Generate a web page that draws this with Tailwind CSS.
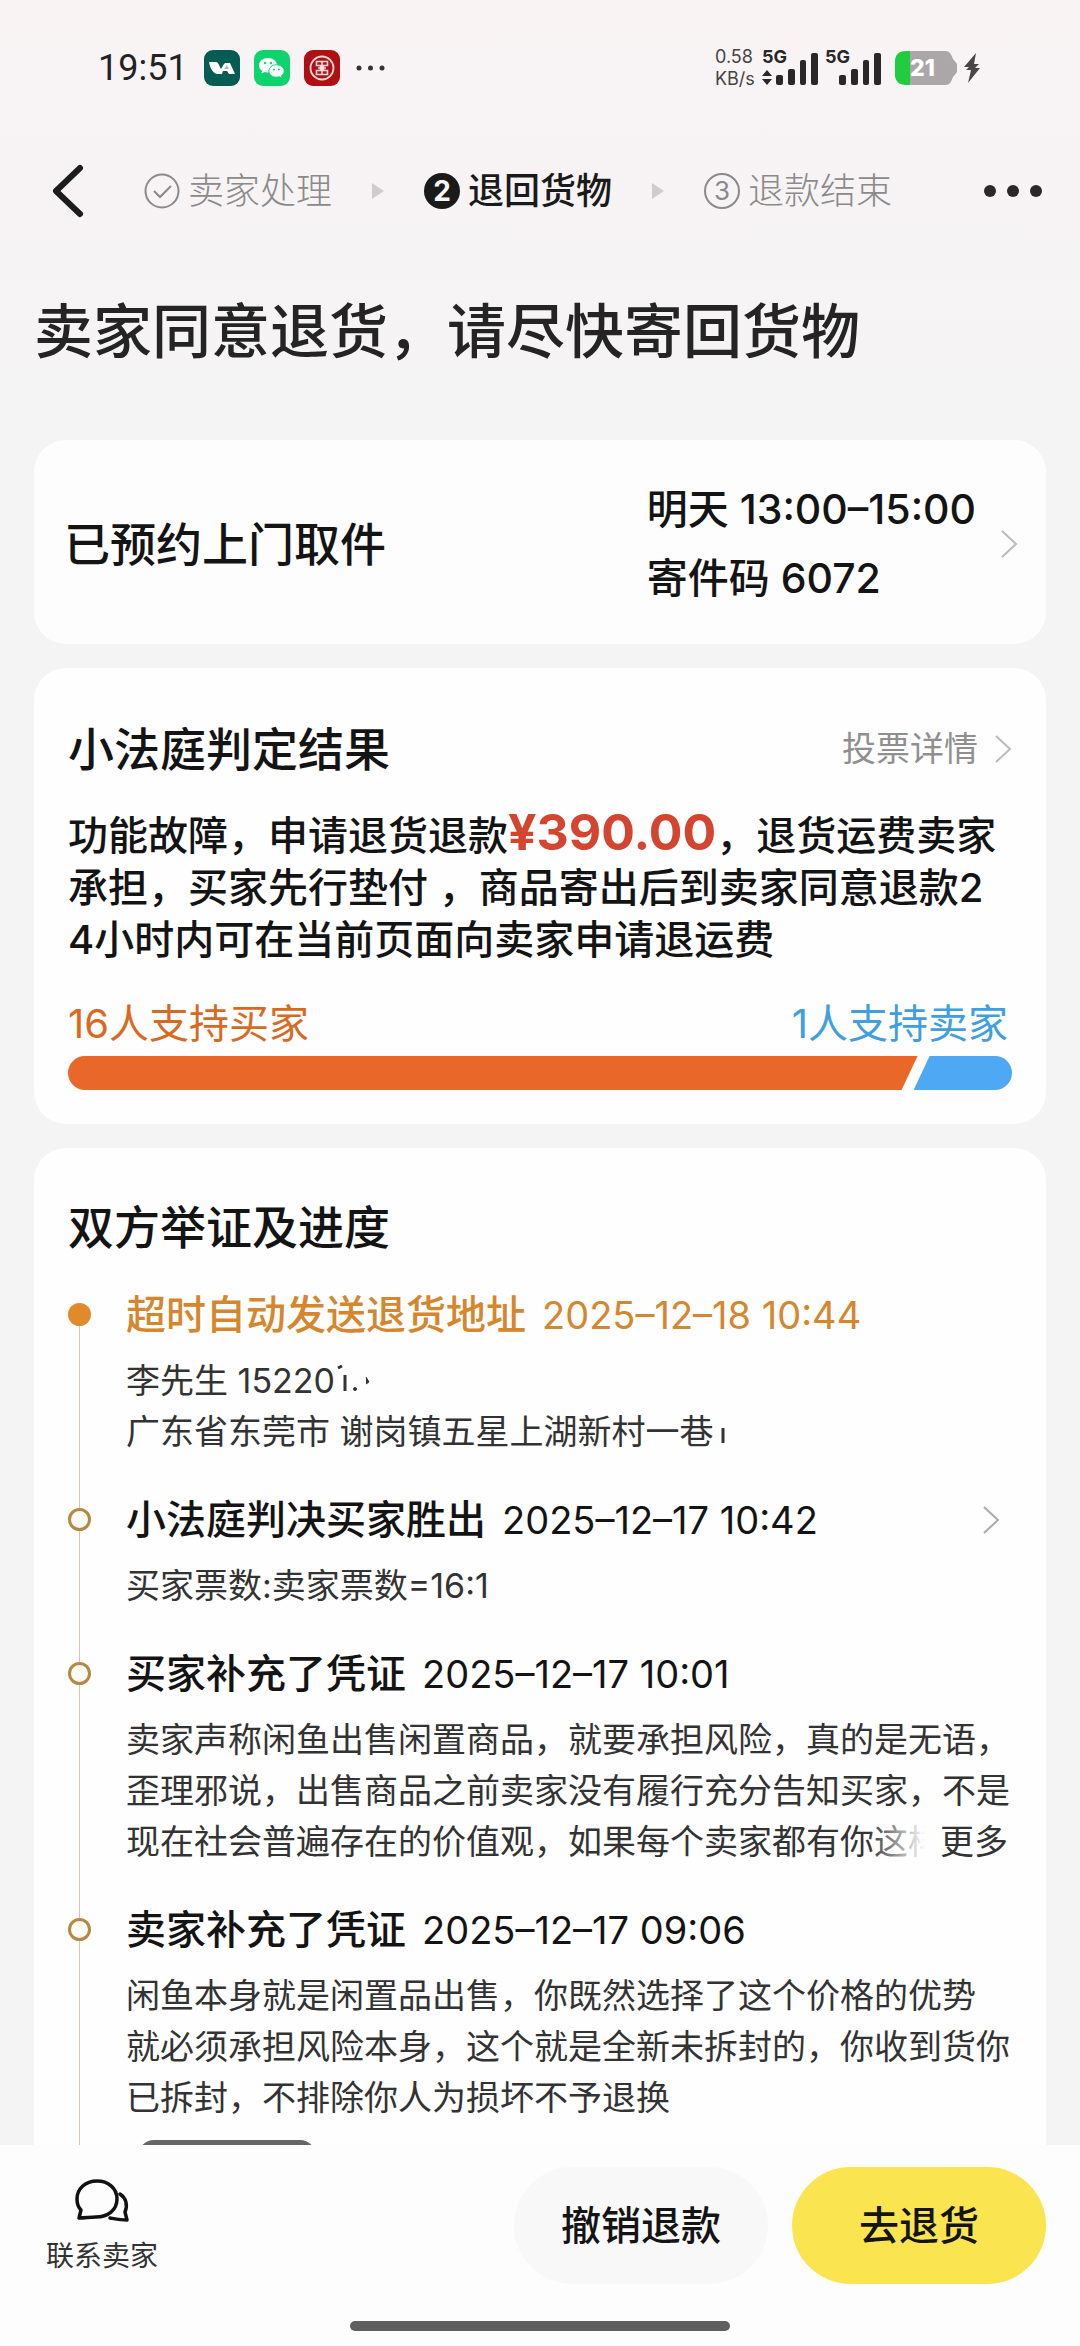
<!DOCTYPE html>
<html lang="zh-CN">
<head>
  <meta charset="UTF-8" />
  <meta name="viewport" content="width=device-width, initial-scale=1.0"/>
  <title>退货详情</title>
  <script src="https://cdn.jsdelivr.net/npm/@tailwindcss/browser@4"></script>
</head>
<body class="h-screen flex flex-col bg-linear-to-b from-[#f9f3f4] to-[#f4f4f5] to-20% text-[#141414] font-['Inter','Noto_Sans_CJK_SC',sans-serif]">

  <!-- status bar -->
  <div class="flex items-center justify-between pl-[98px] pr-[100px] pt-[48px] h-[88px] shrink-0">
    <div class="flex items-center gap-[14px]">
      <span class="text-[36px] leading-[40px] mr-[2px] text-[#222] font-['Roboto']">19:51</span>
      <svg class="size-9" viewBox="0 0 36 36">
        <rect width="36" height="36" rx="9" fill="#045c52"/>
        <path d="M5 12h7c2 0 3 3 5 7l3-5 1-1h5l5 11h-6l-2-3h-4l-1 3h-4c-5 0-8-6-9-12z" fill="#fff"/>
        <path d="M20 19l3-4 2 4z" fill="#9cc4bd"/>
      </svg>
      <svg class="size-9" viewBox="0 0 36 36">
        <rect width="36" height="36" rx="9" fill="#0fd46e"/>
        <path d="M14 8c-5 0-9 3.200-9 7.300 0 2.300 1.200 4.200 3.100 5.500L7.500 23.500l3-1.600c1 .3 2.200.5 3.500.5 5 0 9-3.100 9-7.100S19 8 14 8z" fill="#fff"/>
        <path d="M22.500 14.800c-4.300 0-7.700 2.800-7.700 6.200s3.400 6.200 7.700 6.200c1 0 2-.2 2.900-.4l2.700 1.400-.6-2.500c1.700-1.100 2.700-2.800 2.700-4.700 0-3.400-3.400-6.200-7.700-6.200z" fill="#fff" stroke="#0fd46e" stroke-width="1"/>
        <circle cx="11" cy="13" r="1.200" fill="#0fd46e"/><circle cx="17" cy="13" r="1.200" fill="#0fd46e"/>
        <circle cx="20" cy="19.500" r="1" fill="#0fd46e"/><circle cx="25" cy="19.500" r="1" fill="#0fd46e"/>
      </svg>
      <svg class="size-9" viewBox="0 0 36 36" fill="none" stroke="#f7dada">
        <rect width="36" height="36" rx="9" fill="#ae1014" stroke="none"/>
        <circle cx="18" cy="18" r="11.500" stroke-width="1.800"/>
        <path d="M12.500 11.500h11v4h-4v5h4v4h-11v-4h4v-5h-4zM18 11.500v13M14 18h8" stroke-width="1.600"/>
      </svg>
      <svg class="w-8 h-2" viewBox="0 0 32 8" fill="#333"><circle cx="5" cy="4" r="2.500"/><circle cx="16.500" cy="4" r="2.500"/><circle cx="28" cy="4" r="2.500"/></svg>
    </div>
    <div class="flex items-center text-[#2b2729]">
      <div class="text-[18px] leading-[22px] w-[46px] text-[#444]">
        <div>0.58</div>
        <div>KB/s</div>
      </div>
      <svg class="w-[58px] h-10 mb-1" viewBox="0 -4 58 40" fill="currentColor">
        <text x="1" y="13" font-size="18" font-weight="700">5G</text>
        <path d="M6 20l5 6H1zM6 35l5-6H1z"/>
        <rect x="15" y="25" width="7" height="10" rx="2"/><rect x="27" y="19" width="7" height="16" rx="2"/>
        <rect x="39" y="10" width="6" height="25" rx="2"/><rect x="50" y="3" width="7" height="32" rx="2"/>
      </svg>
      <svg class="w-[58px] h-10 mb-1 ml-[5px]" viewBox="0 -4 58 40" fill="currentColor">
        <text x="1" y="13" font-size="18" font-weight="700">5G</text>
        <rect x="15" y="25" width="7" height="10" rx="2"/><rect x="27" y="19" width="7" height="16" rx="2"/>
        <rect x="39" y="10" width="6" height="25" rx="2"/><rect x="50" y="3" width="7" height="32" rx="2"/>
      </svg>
      <svg class="w-[64px] h-9 ml-[13px]" viewBox="0 0 64 36">
        <path d="M13 1h37c5 0 6 3 8 8l4 5v8l-4 5c-2 5-3 8-8 8H13z" fill="#aba7a8"/>
        <path d="M15 1v34h-4C4 35 0 31 0 25V11C0 5 4 1 11 1z" fill="#22cc3f"/>
        <text x="15" y="26" font-size="23" font-weight="800" fill="#fff">21</text>
      </svg>
      <svg class="w-4 h-9 ml-[5px]" viewBox="0 0 16 36" fill="#4a4648"><path d="M12 3L0 17h5l-3 3h5l-3 13L16 18h-5l4-4h-5z"/></svg>
    </div>
  </div>

  <!-- steps -->
  <nav class="flex items-center h-[206px] pl-[52px] pr-[38px] shrink-0 text-[36px] leading-[52px] text-[#8b898a]">
    <button aria-label="返回"><svg class="w-[32px] h-[54px]" viewBox="0 0 32 54" fill="none" stroke="#1c1c1c" stroke-width="6" stroke-linecap="round" stroke-linejoin="round"><path d="M28 4L4 27l24 23"/></svg></button>
    <div class="flex-1 flex items-center gap-10 ml-[60px]">
      <div class="flex items-center gap-2 font-light">
        <svg class="size-9" viewBox="0 0 36 36" fill="none" stroke="currentColor" stroke-width="2"><circle cx="18" cy="18" r="16.500"/><path d="M10 18l6 6 11-11"/></svg>
        <span>卖家处理</span>
      </div>
      <svg class="w-3 h-4" viewBox="0 0 12 16" fill="#cfcdce"><path d="M0 0l12 8-12 8z"/></svg>
      <div class="flex items-center gap-2 text-[#1a1a1a] font-medium">
        <span class="size-9 rounded-full bg-[#1a1a1a] text-[#f7f5f6] text-[28px] leading-9 font-bold text-center">2</span>
        <span>退回货物</span>
      </div>
      <svg class="w-3 h-4" viewBox="0 0 12 16" fill="#cfcdce"><path d="M0 0l12 8-12 8z"/></svg>
      <div class="flex items-center gap-2 font-light">
        <span class="size-9 rounded-full border-2 border-[#8b898a] text-[26px] leading-8 font-normal text-center">3</span>
        <span>退款结束</span>
      </div>
    </div>
    <button aria-label="更多"><svg class="w-[60px] h-4" viewBox="0 0 60 16" fill="#2a2829"><circle cx="8" cy="8" r="6"/><circle cx="31" cy="8" r="6"/><circle cx="54" cy="8" r="6"/></svg></button>
  </nav>

  <main class="flex-1 min-h-0 overflow-y-auto [scrollbar-width:none] px-[34px] flex flex-col gap-6">
    <h1 class="text-[59px] leading-[76px] font-medium text-[#242424] pb-[46px]">卖家同意退货，请尽快寄回货物</h1>

    <!-- pickup -->
    <a href="#" class="flex items-center bg-[#fefdfe] rounded-[32px] h-[204px] pl-[30px] pr-7 pt-1 shrink-0 font-medium">
      <span class="flex-1 text-[46px] leading-[60px]">已预约上门取件</span>
      <span class="text-[41px] leading-[69px]">明天 13:00–15:00<br>寄件码 6072</span>
      <svg class="w-[18px] h-7 ml-6" viewBox="0 0 18 28" fill="none" stroke="#bbb" stroke-width="2"><path d="M2 1l14 13L2 27"/></svg>
    </a>

    <!-- verdict -->
    <section class="bg-[#fefefe] rounded-[32px] px-[34px] pt-[51px] pb-[34px] shrink-0">
      <div class="flex items-center justify-between">
        <h2 class="text-[46px] leading-[60px] font-medium">小法庭判定结果</h2>
        <a href="#" class="flex items-center gap-4 text-[34px] leading-[52px] text-[#8f8f8f]">投票详情
          <svg class="w-[18px] h-7" viewBox="0 0 18 28" fill="none" stroke="#bbb" stroke-width="2"><path d="M2 1l14 13L2 27"/></svg>
        </a>
      </div>
      <p class="mt-7 text-[40px] leading-[52px] font-medium whitespace-nowrap">功能故障，申请退货退款<strong class="text-[50px] leading-none font-bold text-[#d4452f]">¥390.00</strong>，退货运费卖家<br>承担，买家先行垫付 ，商品寄出后到卖家同意退款2<br>4小时内可在当前页面向卖家申请退运费</p>
      <div class="flex justify-between mt-8 text-[40px] leading-[52px]">
        <span class="text-[#d9691f]">16人支持买家</span>
        <span class="text-[#3f9fe0] pr-1">1人支持卖家</span>
      </div>
      <div class="flex h-[34px] mt-[6px] rounded-full overflow-hidden">
        <div class="bg-[#e96728] [clip-path:polygon(0_0,100%_0,calc(100%_-_16px)_100%,0_100%)]" style="width: 90%"></div>
        <div class="flex-1 -ml-1 bg-[#4fa8f4] [clip-path:polygon(16px_0,100%_0,100%_100%,0_100%)]"></div>
      </div>
    </section>

    <!-- timeline -->
    <section class="flex-1 bg-[#fefefe] rounded-t-[32px] px-[34px] pt-[49px] shrink-0">
      <h2 class="text-[46px] leading-[60px] font-medium mb-8">双方举证及进度</h2>
      <ol id="timeline"></ol>
    </section>
  </main>

  <footer class="shrink-0 bg-[#fefdfd] px-[34px] pt-[22px] pb-[15px]">
    <div class="flex items-center">
      <a href="#" class="flex flex-col items-center gap-4 px-3 text-[28px] leading-9 text-[#333]">
        <svg class="w-14 h-11" viewBox="0 0 56 44" fill="none" stroke="#111" stroke-width="3.500" stroke-linejoin="round" stroke-linecap="round">
          <path d="M23 3C11 3 3 11 3 21c0 5 1 8 4 11l-2 8c6 0 11-1 17-1 12 0 21-7 21-18S34 3 23 3z"/>
          <path d="M46 16c6 4 8 11 5 18l2 8c-6 0-11-1-17-2"/>
        </svg>
        联系卖家
      </a>
      <div class="flex-1 flex justify-end gap-6 text-[40px] font-medium">
        <button class="w-[254px] h-[117px] rounded-full bg-[#f8f8f8]">撤销退款</button>
        <button class="w-[254px] h-[117px] rounded-full bg-[#fae550]">去退货</button>
      </div>
    </div>
    <div class="w-[380px] h-[10px] mx-auto mt-[37px] rounded-full bg-[#5f5f5f]"></div>
  </footer>

  <script>
    // masked characters leave only a few strokes of the digits
    const maskedPhone = '<svg class="inline w-10 h-8 align-baseline" viewBox="0 0 40 32" stroke="#333" fill="#333"><path d="M3 7l4-2M10 14v16" stroke-width="3" fill="none"/><circle cx="20" cy="28" r="1.500"/><path d="M31 16l3 5-3 2" stroke-width="1"/></svg>';
    const maskedAddress = '<svg class="inline w-4 h-8 align-baseline" viewBox="0 0 16 32" stroke="#333"><path d="M9 16v15" stroke-width="3"/></svg>';

    const items = [
      {
        title: '超时自动发送退货地址',
        time: '2025–12–18 10:44',
        active: true,
        lines: ['李先生 15220' + maskedPhone, '广东省东莞市 谢岗镇五星上湖新村一巷' + maskedAddress],
      },
      {
        title: '小法庭判决买家胜出',
        time: '2025–12–17 10:42',
        link: true,
        lines: ['买家票数:卖家票数=16:1'],
      },
      {
        title: '买家补充了凭证',
        time: '2025–12–17 10:01',
        more: true,
        lines: ['卖家声称闲鱼出售闲置商品，就要承担风险，真的是无语，', '歪理邪说，出售商品之前卖家没有履行充分告知买家，不是', '现在社会普遍存在的价值观，如果每个卖家都有你这样'],
      },
      {
        title: '卖家补充了凭证',
        time: '2025–12–17 09:06',
        photo: true,
        lines: ['闲鱼本身就是闲置品出售，你既然选择了这个价格的优势', '就必须承担风险本身，这个就是全新未拆封的，你收到货你', '已拆封，不排除你人为损坏不予退换'],
      },
    ];

    document.getElementById('timeline').innerHTML = items.map(item => `
      <li class="flex gap-9">
        <div class="flex flex-col items-center w-[22px] shrink-0">
          <span class="w-px h-[14px] ${item.active ? '' : 'bg-[#d3c8b8]'}"></span>
          <span class="size-[23px] shrink-0 rounded-full ${item.active ? 'bg-[#e08a2c]' : 'border-[3px] border-[#b98743] bg-[#fffdf5]'}"></span>
          <span class="w-px flex-1 bg-[#d3c8b8]"></span>
        </div>
        <div class="flex-1 min-w-0 pb-[37px]">
          <div class="flex items-center text-[40px] leading-[52px] whitespace-nowrap ${item.active ? 'text-[#d6862c]' : ''}">
            <h3 class="font-medium">${item.title}</h3>
            <time class="ml-4 text-[38px]">${item.time}</time>
            ${item.link ? '<a href="#" aria-label="查看" class="ml-auto mr-3"><svg class="w-[18px] h-7" viewBox="0 0 18 28" fill="none" stroke="#aaa" stroke-width="2"><path d="M2 1l14 13L2 27"/></svg></a>' : ''}
          </div>
          <div class="relative mt-[14px] text-[34px] leading-[51px] whitespace-nowrap text-[#333]">
            ${item.lines.map(line => `<p>${line}</p>`).join('')}
            ${item.more ? '<button class="absolute right-0 bottom-0 pl-[72px] pr-1 bg-linear-to-r from-transparent to-[#fefefe] to-40%">更多</button>' : ''}
          </div>
          ${item.photo ? '<div class="mt-[17px] ml-3 w-[178px] h-[178px] rounded-2xl bg-[#666]"></div>' : ''}
        </div>
      </li>
    `).join('');
  </script>
</body>
</html>
